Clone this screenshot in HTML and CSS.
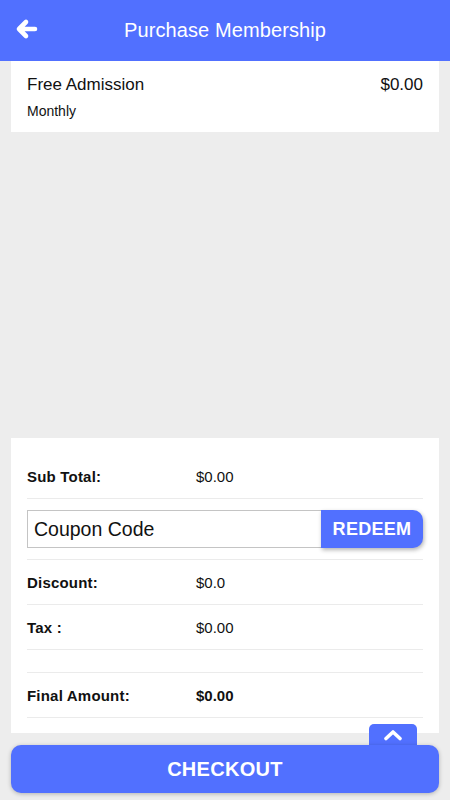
FILE: index.html
```html
<!DOCTYPE html>
<html lang="en">
<head>
    <meta charset="UTF-8">
    <meta name="viewport" content="width=device-width, initial-scale=1.0">
    <title>Purchase Membership</title>
    <link rel="stylesheet" href="styles.css">
</head>
<body>
    <header class="topbar">
        <button class="back-btn" aria-label="Back">
            <svg width="24" height="24" viewBox="0 0 24 24">
                <path d="M20 12H5M11 5l-7 7 7 7" fill="none" stroke="#fff" stroke-width="4.6" stroke-linecap="round" stroke-linejoin="round"/>
            </svg>
        </button>
        <h1>Purchase Membership</h1>
    </header>

    <section class="plan">
        <div class="plan-row">
            <span class="plan-name">Free Admission</span>
            <span class="plan-price">$0.00</span>
        </div>
        <div class="plan-period">Monthly</div>
    </section>

    <div class="spacer"></div>

    <section class="summary">
        <div class="row">
            <span class="label">Sub Total:</span>
            <span class="value">$0.00</span>
        </div>
        <div class="row coupon">
            <input type="text" class="coupon-input" value="Coupon Code">
            <button class="redeem">REDEEM</button>
        </div>
        <div class="row">
            <span class="label">Discount:</span>
            <span class="value">$0.0</span>
        </div>
        <div class="row">
            <span class="label">Tax :</span>
            <span class="value">$0.00</span>
        </div>
        <div class="row empty"></div>
        <div class="row final">
            <span class="label">Final Amount:</span>
            <span class="value">$0.00</span>
        </div>
    </section>

    <footer class="footer">
        <button class="scroll-top" aria-label="Scroll to top">
            <svg width="20" height="12" viewBox="0 0 20 12">
                <path d="M3 9.5l7-6.5 7 6.5" fill="none" stroke="#fff" stroke-width="3.6" stroke-linecap="round" stroke-linejoin="round"/>
            </svg>
        </button>
        <button class="checkout">CHECKOUT</button>
    </footer>
</body>
</html>
```

FILE: styles.css
```css
body {
    font-family: "Liberation Sans", Arial, sans-serif;
    margin: 0;
    padding: 0;
    background-color: #ededed;
    color: #111;
    height: 800px;
    display: flex;
    flex-direction: column;
}
button {
    font-family: inherit;
    border: none;
    cursor: pointer;
}
.topbar {
    background-color: #5170ff;
    height: 61px;
    display: flex;
    align-items: center;
    justify-content: center;
    position: relative;
    flex-shrink: 0;
}
.topbar h1 {
    color: #fff;
    font-size: 20px;
    font-weight: normal;
    margin: 0;
    padding-bottom: 1px;
    letter-spacing: 0.1px;
}
.back-btn {
    position: absolute;
    left: 15px;
    top: 17px;
    background: none;
    padding: 0;
    width: 24px;
    height: 24px;
}
.back-btn svg {
    display: block;
}
.plan {
    background-color: #fff;
    margin: 0 11px;
    padding: 13px 16px 0;
    height: 71px;
    box-sizing: border-box;
    flex-shrink: 0;
}
.plan-row {
    display: flex;
    justify-content: space-between;
    font-size: 17px;
    line-height: 22px;
}
.plan-period {
    font-size: 14px;
    margin-top: 7px;
}
.spacer {
    flex: 1;
}
.summary {
    background-color: #fff;
    margin: 0 11px;
    padding: 16px 16px 15px;
}
.row {
    display: flex;
    align-items: center;
    height: 44px;
    border-bottom: 1px solid #ebebeb;
    font-size: 15px;
}
.label {
    font-weight: bold;
    width: 169px;
    letter-spacing: 0.2px;
}
.final .value {
    font-weight: bold;
}
.row.coupon {
    height: 60px;
}
.row.empty {
    height: 22px;
}
.coupon-input {
    flex: 1;
    height: 38px;
    box-sizing: border-box;
    border: 1px solid #c4c4c4;
    border-right: none;
    font-family: inherit;
    font-size: 19.5px;
    color: #111;
    padding: 0 6px;
    margin: 0;
    outline: none;
}
.redeem {
    width: 102px;
    height: 38px;
    background-color: #5170ff;
    color: #fff;
    font-size: 18px;
    font-weight: bold;
    letter-spacing: 0.3px;
    border-radius: 0 10px 10px 0;
    box-shadow: 1px 2px 4px rgba(0, 0, 0, 0.3);
}
.footer {
    position: relative;
    margin: 12px 11px 7px;
}
.checkout {
    position: relative;
    display: block;
    width: 100%;
    height: 48px;
    background-color: #5170ff;
    color: #fff;
    font-size: 20px;
    font-weight: bold;
    letter-spacing: 0.3px;
    border-radius: 10px;
    box-shadow: 0 1px 4px rgba(0, 0, 0, 0.25);
}
.scroll-top {
    position: absolute;
    right: 22px;
    top: -21px;
    width: 48px;
    height: 30px;
    padding: 0 0 8px;
    background-color: #5170ff;
    border-radius: 5px 5px 0 0;
    display: flex;
    align-items: center;
    justify-content: center;
}
.scroll-top svg {
    display: block;
}
```
